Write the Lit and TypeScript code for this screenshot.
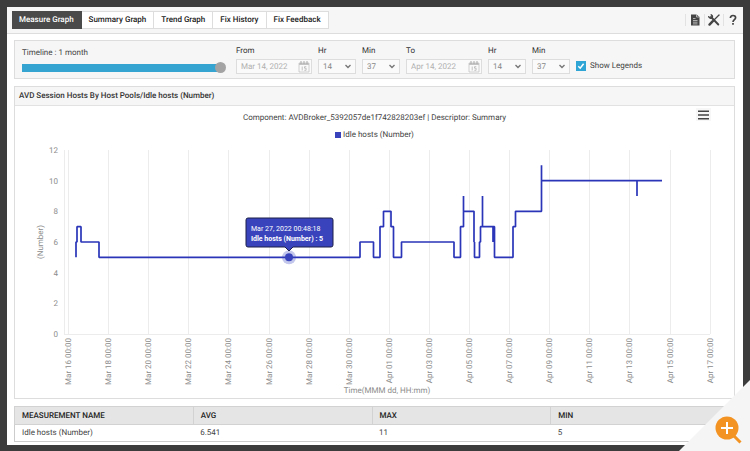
import { LitElement, html, svg, css } from "lit";
import { customElement, property, state } from "lit/decorators.js";

const TICKS = [
  "Mar 16", "Mar 18", "Mar 20", "Mar 22", "Mar 24", "Mar 26", "Mar 28", "Mar 30", "Apr 01",
  "Apr 03", "Apr 05", "Apr 07", "Apr 09", "Apr 11", "Apr 13", "Apr 15", "Apr 17",
];

// [offset along the time axis, hosts]; 40.1 units are two days
const SERIES: [number, number][] = [
  [8, 5], [8, 6], [9, 6], [9, 7], [13, 7], [13, 6], [31, 6], [31, 5], [292, 5], [292, 6],
  [305.5, 6], [305.5, 5], [312, 5], [312, 7], [315.5, 7], [315.5, 8], [323, 8], [323, 7],
  [325.5, 7], [325.5, 5], [333.5, 5], [333.5, 6], [386, 6], [386, 5], [392.5, 5], [392.5, 7],
  [395.5, 7], [395.5, 9], [395.5, 8], [406, 8], [406, 6], [406.5, 6], [406.5, 5], [411.5, 5],
  [411.5, 6], [412.5, 6], [412.5, 7], [414.5, 7], [414.5, 9], [414.5, 7], [425, 7], [425, 6],
  [425, 7], [426.5, 7], [426.5, 5], [445, 5], [445, 7], [447.5, 7], [447.5, 8], [473.5, 8],
  [473.5, 11], [473.5, 10], [569, 10], [569, 9], [569, 10], [594, 10],
];

const AXIS_LEFT = 49;
const FIRST_TICK = 53;
const TICK_STEP = 40.1;
const TOP = 9;
const BASE = 193;
const px = (x: number) => FIRST_TICK + x;
const py = (v: number) => BASE - ((BASE - TOP) * v) / 12;

@customElement("step-chart")
export class StepChart extends LitElement {
  static styles = css`
    :host { display: block; }
    svg { display: block; width: 100%; height: auto; }
    text { font: 8px Roboto, sans-serif; text-rendering: geometricPrecision; fill: #8c8c8c; }
    .end { text-anchor: end; }
    .mid { text-anchor: middle; }
    .grid { stroke: #ececec; stroke-width: 1; shape-rendering: crispEdges; }
    .line { fill: none; stroke: #2a35b8; stroke-width: 1.7; stroke-linejoin: bevel; }
    .halo { fill: #3944bc; fill-opacity: 0.3; }
    .dot { fill: #3944bc; }
    .tip { fill: #3944bc; stroke: #1c1f4a; stroke-width: 1; }
    .tip-text { fill: #fff; font-size: 7px; text-rendering: auto; }
    .strong { font-weight: 700; }
  `;

  render() {
    const d = SERIES.map(([x, v], i) => `${i ? "L" : "M"}${px(x)} ${py(v)}`).join("");
    const right = px(TICK_STEP * 16);
    return html`
      <svg viewBox="0 0 719 257" role="img" aria-label="Idle hosts over time">
        <line class="grid" x1=${AXIS_LEFT} x2=${AXIS_LEFT} y1=${TOP} y2=${BASE}></line>
        <line class="grid" x1=${AXIS_LEFT} x2=${right} y1=${BASE} y2=${BASE}></line>
        ${TICKS.map((t, i) => {
          const x = Math.round(px(i * TICK_STEP));
          return svg`
            <line class="grid" x1=${x} x2=${x} y1=${TOP} y2=${BASE}></line>
            <text class="end" transform="translate(${x + 3} ${BASE + 4}) rotate(-90)">${t} 00:00</text>`;
        })}
        ${[0, 2, 4, 6, 8, 10, 12].map(
          (v) => svg`<text class="end" x="43" y=${Math.round(py(v)) + 3}>${v}</text>`
        )}
        <text class="mid" transform="translate(28 101) rotate(-90)">(Number)</text>
        <text class="mid" x="372" y="252">Time(MMM dd, HH:mm)</text>
        <path class="line" d=${d}></path>
        <circle class="halo" cx="274" cy=${py(5)} r="7"></circle>
        <circle class="dot" cx="274" cy=${py(5)} r="4"></circle>
        <path class="tip" d="M233 77H316Q318 77 318 79V104Q318 106 316 106H278L274 110L270 106H233Q231 106 231 104V79Q231 77 233 77Z"></path>
        <text class="tip-text" x="236" y="90">Mar 27, 2022 00:48:18</text>
        <text class="tip-text strong" x="236" y="100">Idle hosts (Number) : 5</text>
      </svg>
    `;
  }
}

@customElement("date-field")
export class DateField extends LitElement {
  @property() label = "";
  @property() value = "";
  static styles = css`
    :host { display: block; }
    label { display: block; line-height: 12px; margin-bottom: 2px; color: #333; }
    .box { display: flex; align-items: center; box-sizing: border-box; width: 76px; height: 15px; border: 1px solid #ddd; background: #fafafa; padding: 0 1px 0 4px; }
    input { flex: 1; min-width: 0; border: 0; padding: 0; background: none; font: 8px Roboto, sans-serif; text-rendering: geometricPrecision; color: #b0b0b0; outline: none; }
    svg { display: block; flex: none; }
  `;
  render() {
    return html`
      <label for="f">${this.label}</label>
      <div class="box">
        <input id="f" type="text" .value=${this.value} />
        <svg width="12" height="12" viewBox="0 0 12 12" fill="none" stroke="#c4c4c4">
          <path d="M1 2H11V11H1Z" stroke-width=".8"></path>
          <path d="M1 3H11" stroke-width="2"></path>
          <path d="M3 0V3M6 0V3M9 0V3" stroke="#aaa"></path>
          <path d="M4.2 5.5V9.5M8.3 5.7H6.5V7.2H8.1V9.3H6.3" stroke="#aaa" stroke-width=".7"></path>
        </svg>
      </div>
    `;
  }
}

@customElement("pick-field")
export class PickField extends LitElement {
  @property() label = "";
  @property() value = "";
  static styles = css`
    :host { display: block; }
    label { display: block; line-height: 12px; margin-bottom: 2px; color: #333; }
    .box { display: grid; width: 38px; height: 15px; }
    select, svg { grid-area: 1 / 1; }
    select { appearance: none; box-sizing: border-box; width: 100%; height: 15px; margin: 0; border: 1px solid #ddd; border-radius: 0; background: #fafafa; padding: 0 0 0 4px; font: 8px Roboto, sans-serif; text-rendering: geometricPrecision; color: #888; }
    svg { align-self: center; justify-self: end; margin-right: 5px; pointer-events: none; }
  `;
  render() {
    return html`
      <label for="f">${this.label}</label>
      <div class="box">
        <select id="f"><option>${this.value}</option></select>
        <svg width="6" height="5" viewBox="0 0 6 5" fill="none" stroke="#777" stroke-width="1.4">
          <path d="M.5 1L3 3.5L5.5 1"></path>
        </svg>
      </div>
    `;
  }
}

@customElement("app-root")
export class AppRoot extends LitElement {
  @state() private tab = 0;
  @state() private legends = true;

  static styles = css`
    :host { display: block; position: relative; overflow: hidden; background: #3c3c3c; padding: 7px; font: 8px/12px Roboto, sans-serif; text-rendering: geometricPrecision; color: #444; }
    button { font: inherit; color: inherit; text-rendering: inherit; border: 0; margin: 0; padding: 0; background: none; cursor: pointer; }
    .page { background: #fff; }
    .bar { display: flex; align-items: center; box-sizing: border-box; height: 27px; padding: 0 1px 0 5px; background: #f6f6f6; border-bottom: 1px solid #ddd; }
    .tabs { display: flex; flex: 1; }
    .tab { box-sizing: border-box; height: 18px; padding: 0 7px; border: 1px solid #ddd; border-left-width: 0; background: #fff; font-weight: 500; color: #222; }
    .tab.on { background: #4a4a4a; border-color: #4a4a4a; color: #fff; }
    .tool { display: flex; align-items: center; justify-content: center; width: 19px; height: 12px; border-left: 1px solid #e2e2e2; }
    .body { display: grid; gap: 7px; padding: 6px 8px 3px 7px; }
    .panel { border: 1px solid #ddd; background: #fff; }
    .filters { display: flex; align-items: flex-start; gap: 6px; box-sizing: border-box; height: 39px; padding: 4px 7px; background: #f6f6f6; }
    .timeline { display: flex; flex-direction: column; gap: 3px; width: 204px; margin: 2px 4px 0 0; }
    .range { appearance: none; display: block; width: 100%; height: 11px; margin: 0; background: linear-gradient(#35a4d1, #35a4d1) left / calc(100% - 6px) 8px no-repeat; }
    .range::-webkit-slider-thumb { appearance: none; width: 11px; height: 11px; border-radius: 50%; background: #a3a3a3; }
    .check { display: flex; align-items: center; gap: 4px; margin-top: 13px; height: 15px; }
    .check input { appearance: none; width: 10px; height: 10px; margin: 0; background: #fff; border: 1px solid #2fa5d6; box-sizing: border-box; }
    .check input:checked { background: #2fa5d6; }
    .tick { display: grid; }
    .tick > * { grid-area: 1 / 1; }
    .tick svg { pointer-events: none; }
    .name { margin: 0; padding: 3px 4px; border-bottom: 1px solid #e2e2e2; background: #f6f6f6; font: 500 8px/12px Roboto, sans-serif; color: #333; }
    .chart { position: relative; padding-top: 6px; }
    .menu { position: absolute; top: 2px; right: 23px; display: grid; place-items: center; width: 15px; height: 13px; background: #f7f7f7; }
    .title, .legend { text-align: center; }
    .legend { display: flex; justify-content: center; align-items: center; gap: 2px; padding-top: 5px; }
    .swatch { width: 6px; height: 6px; background: #3944bc; }
    table { width: calc(100% - 5px); table-layout: fixed; border-collapse: collapse; text-align: left; border: 1px solid #ccc; }
    th, td { padding: 2px 7px; }
    th { padding-top: 3px; background: #e5e5e5; border: 1px solid #d2d2d2; font-weight: 500; color: #222; }
    .zoom { position: absolute; right: 0; bottom: 0; display: block; }
    .zoom svg { display: block; }
  `;

  render() {
    const tabs = ["Measure Graph", "Summary Graph", "Trend Graph", "Fix History", "Fix Feedback"];
    return html`
      <div class="page">
        <header class="bar">
          <nav class="tabs">
            ${tabs.map(
              (t, i) => html`<button class="tab ${i === this.tab ? "on" : ""}" @click=${() => (this.tab = i)}>${t}</button>`
            )}
          </nav>
          <button class="tool" aria-label="Report">
            <svg width="10" height="12" viewBox="0 0 10 12">
              <path d="M1 .5H6.5L9.5 3V11.5H1Z" fill="#444"></path>
              <path d="M6.5 .5V3H9.5M3 4.5H5.5M3 6.5H7.5M3 8.2H7.5M3 9.9H7.5" fill="none" stroke="#ddd" stroke-width=".7"></path>
            </svg>
          </button>
          <button class="tool" aria-label="Settings">
            <svg width="12" height="12" viewBox="0 0 12 12" fill="none" stroke="#444" stroke-linecap="round">
              <path d="M3 3L10.3 10.5" stroke-width="1.9"></path>
              <path d="M.8 2.7A2.2 2.2 0 0 0 4 3.8A2.2 2.2 0 0 0 3.2 .8" stroke-width="1.5"></path>
              <path d="M11 1L6.5 5.5" stroke-width="1.3"></path>
              <path d="M4.8 7.2L1.5 10.6" stroke-width="2.4"></path>
            </svg>
          </button>
          <button class="tool" aria-label="Help">
            <svg width="8" height="12" viewBox="0 0 8 12" fill="none" stroke="#444" stroke-width="1.7">
              <path d="M1.4 4C1.4 .7 6.6 .7 6.6 3.7C6.6 5.6 4 5.7 4 8"></path>
              <path d="M4 9V10.8"></path>
            </svg>
          </button>
        </header>

        <main class="body">
          <section class="panel filters">
            <div class="timeline">
              <label for="range">Timeline : 1 month</label>
              <input class="range" id="range" type="range" min="0" max="100" value="100" />
            </div>
            <date-field label="From" value="Mar 14, 2022"></date-field>
            <pick-field label="Hr" value="14"></pick-field>
            <pick-field label="Min" value="37"></pick-field>
            <date-field label="To" value="Apr 14, 2022"></date-field>
            <pick-field label="Hr" value="14"></pick-field>
            <pick-field label="Min" value="37"></pick-field>
            <div class="check">
              <span class="tick">
                <input id="legends" type="checkbox" .checked=${this.legends}
                  @change=${(e: Event) => (this.legends = (e.target as HTMLInputElement).checked)} />
                <svg width="10" height="10" viewBox="0 0 10 10" fill="none" stroke="#fff" stroke-width="1.5">
                  <path d="M2.3 5.3L4.2 7.2L7.6 2.8"></path>
                </svg>
              </span>
              <label for="legends">Show Legends</label>
            </div>
          </section>

          <section class="panel">
            <h2 class="name">AVD Session Hosts By Host Pools/Idle hosts (Number)</h2>
            <div class="chart">
              <div class="title">Component: AVDBroker_5392057de1f742828203ef | Descriptor: Summary</div>
              <div class="legend">
                ${this.legends ? html`<span class="swatch"></span><span>Idle hosts (Number)</span>` : "\u00a0"}
              </div>
              <button class="menu" aria-label="Chart menu">
                <svg width="11" height="10" viewBox="0 0 11 10" stroke="#444" stroke-width="1.6">
                  <path d="M0 1.2H11M0 5H11M0 8.8H11"></path>
                </svg>
              </button>
              <step-chart></step-chart>
            </div>
          </section>

          <table>
            <thead>
              <tr><th>MEASUREMENT NAME</th><th>AVG</th><th>MAX</th><th>MIN</th></tr>
            </thead>
            <tbody>
              <tr><td>Idle hosts (Number)</td><td>6.541</td><td>11</td><td>5</td></tr>
            </tbody>
          </table>
        </main>
      </div>

      <button class="zoom" aria-label="Enlarge">
        <svg width="72" height="72" viewBox="0 0 72 72">
          <path d="M0 72L72 0V72Z" fill="#f5f5f5"></path>
          <path d="M55 55L62.5 62.5" stroke="#f39322" stroke-width="3"></path>
          <circle cx="49" cy="48" r="11.5" fill="#f39322"></circle>
          <path d="M43 48H55M49 42V54" stroke="#fff" stroke-width="2"></path>
        </svg>
      </button>
    `;
  }
}
